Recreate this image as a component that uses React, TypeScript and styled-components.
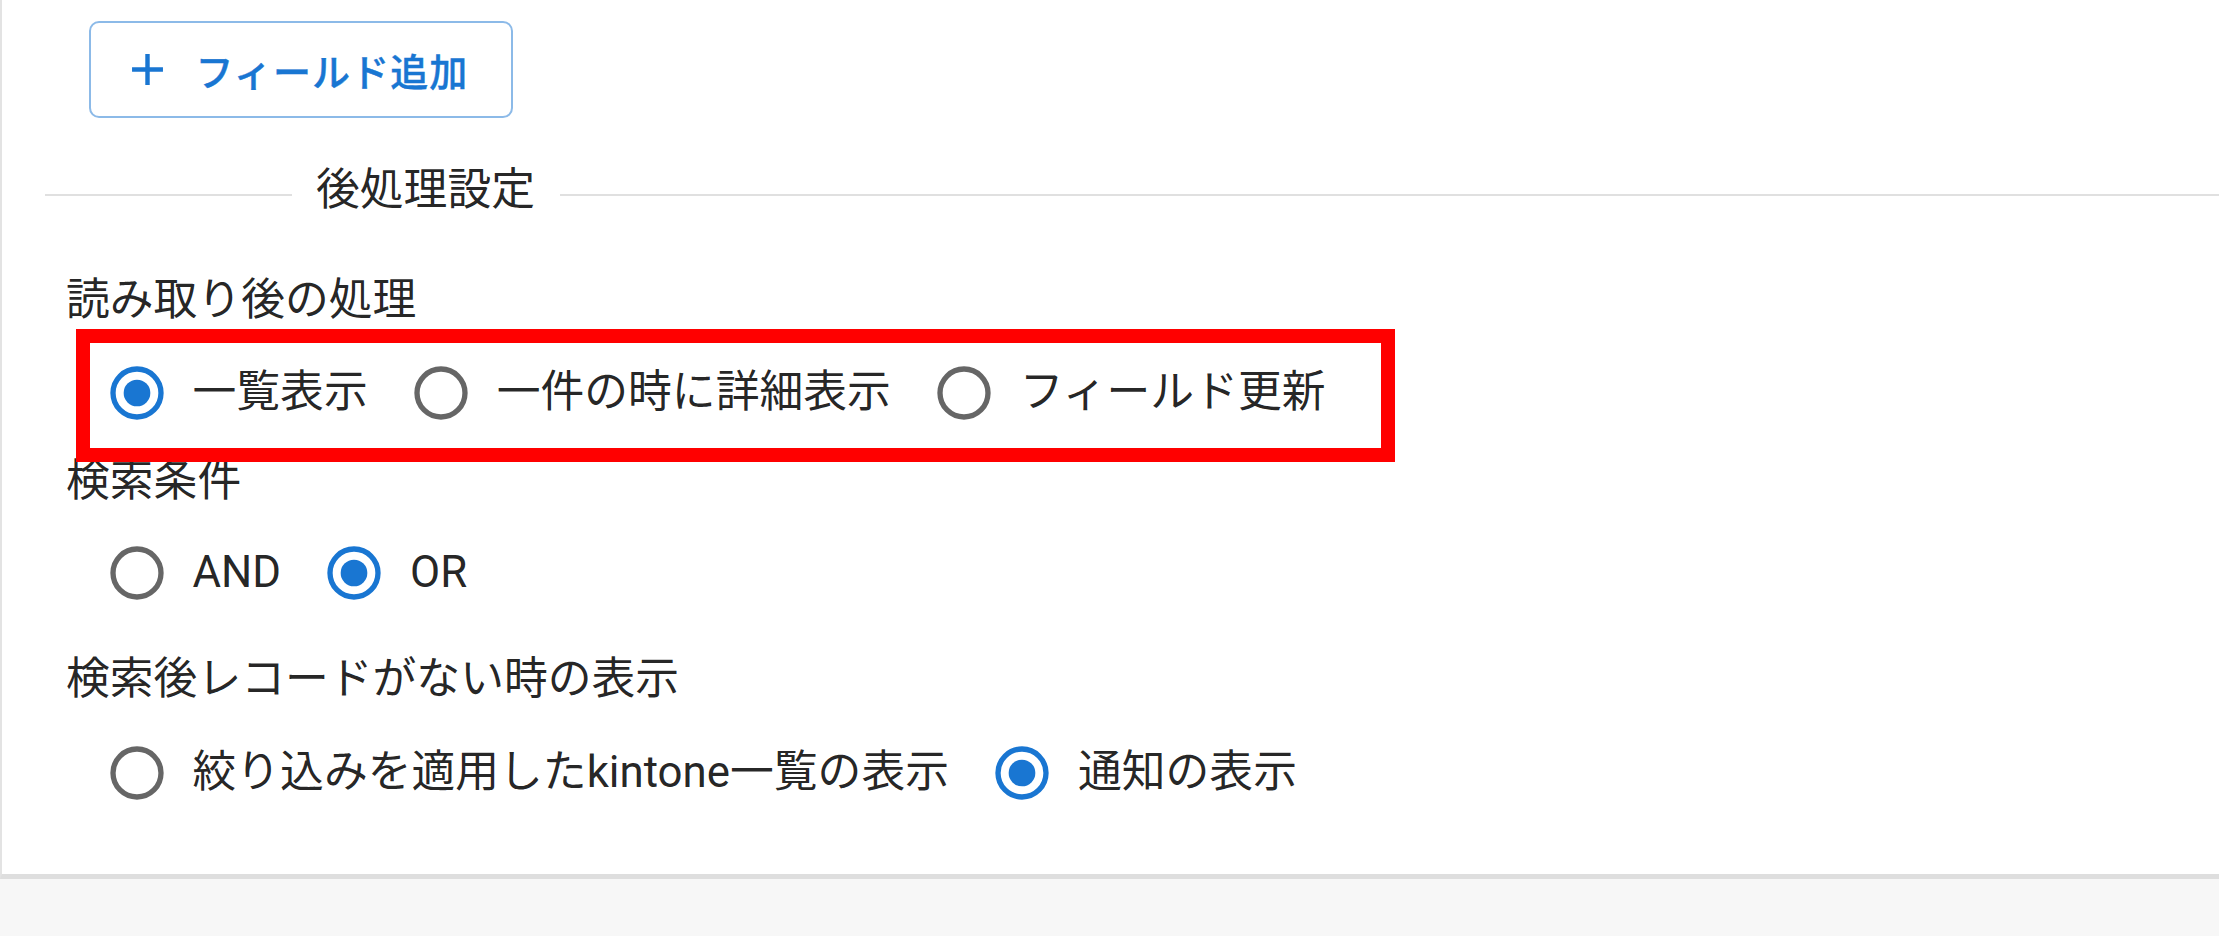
import * as React from 'react';
import styled, { createGlobalStyle } from 'styled-components';

const GlobalStyle = createGlobalStyle`
    html, body {
        margin: 0;
        padding: 0;
        background: #f7f7f7;
    }
    body {
        font-family: Roboto, "Noto Sans CJK JP", sans-serif;
        color: rgba(0, 0, 0, 0.87);
    }
`;

const Panel = styled.section`
    background: #fff;
    border-left: 2px solid #e3e3e3;
    border-bottom: 5px solid #dedede;
    padding: 21px 0 45px 0;
`;

const AddButton = styled.button`
    display: inline-flex;
    align-items: center;
    box-sizing: border-box;
    height: 97px;
    margin-left: 87px;
    padding: 0 43px 0 29.5px;
    border: 2.5px solid rgba(25, 118, 210, 0.5);
    border-radius: 10px;
    background: transparent;
    color: #1976d2;
    font-family: inherit;
    font-size: 38px;
    font-weight: 500;
    letter-spacing: 1.1px;
    -webkit-text-stroke: 0.4px currentColor;
    white-space: nowrap;
    & svg {
        width: 53px;
        height: 53px;
        margin-right: 22px;
        fill: currentColor;
        flex-shrink: 0;
    }
`;

const Divider = styled.div`
    display: flex;
    align-items: center;
    height: 61px;
    margin: 46.5px 0 0 43px;
    &::before {
        content: '';
        width: 247px;
        border-top: 2px solid #e0e0e0;
    }
    &::after {
        content: '';
        flex: 1;
        border-top: 2px solid #e0e0e0;
    }
`;

const DividerText = styled.span`
    padding: 0 25px 10px 24px;
    font-size: 43.8px;
    line-height: 61px;
    white-space: nowrap;
`;

const Form = styled.div`
    margin-left: 64px;
    display: flex;
    flex-direction: column;
    align-items: flex-start;
`;

const FieldLabel = styled.div<{ $top: number }>`
    margin-top: ${p => p.$top}px;
    font-size: 43.8px;
    line-height: 61px;
    white-space: nowrap;
`;

const Row = styled.div<{ $top: number; $framed?: boolean }>`
    position: relative;
    display: flex;
    align-items: center;
    margin: ${p => p.$top}px 0 0 14.5px;
    ${p => p.$framed && `
        &::after {
            content: '';
            position: absolute;
            left: -4.5px;
            top: -8px;
            width: 1319px;
            height: 133px;
            box-sizing: border-box;
            border: 14px solid #ff0000;
            pointer-events: none;
        }
    `}
`;

const Option = styled.label`
    display: inline-flex;
    align-items: center;
    margin-right: 17px;
    cursor: pointer;
`;

const RadioBox = styled.span`
    display: flex;
    align-items: center;
    justify-content: center;
    width: 112px;
    height: 112px;
    flex-shrink: 0;
    & svg {
        width: 64px;
        height: 64px;
    }
`;

const OptionText = styled.span`
    font-size: 43.8px;
    line-height: 1.5;
    white-space: nowrap;
`;

const PlusIcon = () => (
    <svg viewBox="0 0 24 24">
        <path d="M19 13h-6v6h-2v-6H5v-2h6V5h2v6h6v2z" />
    </svg>
);

const RadioIcon = ({ checked }: { checked: boolean }) => (
    <svg viewBox="0 0 24 24">
        <circle
            cx="12"
            cy="12"
            r="9"
            fill="none"
            stroke={checked ? '#1976d2' : 'rgba(0, 0, 0, 0.6)'}
            strokeWidth="2"
        />
        {checked && <circle cx="12" cy="12" r="5" fill="#1976d2" />}
    </svg>
);

type Choice = { label: string; checked: boolean };

const RadioRow = ({ choices, top, framed }: { choices: Choice[]; top: number; framed?: boolean }) => (
    <Row $top={top} $framed={framed}>
        {choices.map(c => (
            <Option key={c.label}>
                <RadioBox>
                    <RadioIcon checked={c.checked} />
                </RadioBox>
                <OptionText>{c.label}</OptionText>
            </Option>
        ))}
    </Row>
);

const App = () => (
    <>
        <GlobalStyle />
        <Panel>
            <AddButton>
                <PlusIcon />
                フィールド追加
            </AddButton>
            <Divider>
                <DividerText>後処理設定</DividerText>
            </Divider>
            <Form>
                <FieldLabel $top={44.5}>読み取り後の処理</FieldLabel>
                <RadioRow
                    top={6}
                    framed
                    choices={[
                        { label: '一覧表示', checked: true },
                        { label: '一件の時に詳細表示', checked: false },
                        { label: 'フィールド更新', checked: false },
                    ]}
                />
                <FieldLabel $top={2}>検索条件</FieldLabel>
                <RadioRow
                    top={5}
                    choices={[
                        { label: 'AND', checked: false },
                        { label: 'OR', checked: true },
                    ]}
                />
                <FieldLabel $top={20}>検索後レコードがない時の表示</FieldLabel>
                <RadioRow
                    top={7}
                    choices={[
                        { label: '絞り込みを適用したkintone一覧の表示', checked: false },
                        { label: '通知の表示', checked: true },
                    ]}
                />
            </Form>
        </Panel>
    </>
);

export default App;
